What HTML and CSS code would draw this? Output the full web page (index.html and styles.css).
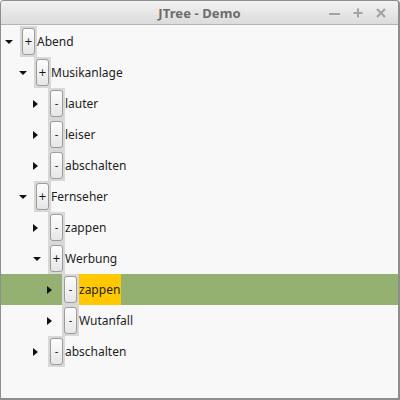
FILE: index.html
```html
<!DOCTYPE html>
<html lang="de">
<head>
  <meta charset="UTF-8">
  <title>JTree - Demo</title>
  <link rel="stylesheet" href="styles.css">
</head>
<body>
  <div class="window">
    <div class="titlebar">
      <span class="title">JTree - Demo</span>
      <div class="controls">
        <svg width="14" height="14" viewBox="0 0 14 14"><path d="M1 8h11" stroke="#a3a3a3" stroke-width="2"/></svg>
        <svg width="14" height="14" viewBox="0 0 14 14"><path d="M2.5 7h9M7 2.5v9" stroke="#a3a3a3" stroke-width="2"/></svg>
        <svg width="14" height="14" viewBox="0 0 14 14"><path d="M3 3l8 8M11 3l-8 8" stroke="#a3a3a3" stroke-width="2.2"/></svg>
      </div>
    </div>
    <ul class="tree">
      <li class="row lvl0"><span class="toggle open"></span><span class="box"><span class="btn">+</span></span><span class="label">Abend</span></li>
      <li class="row lvl1"><span class="toggle open"></span><span class="box"><span class="btn">+</span></span><span class="label">Musikanlage</span></li>
      <li class="row lvl2"><span class="toggle"></span><span class="box"><span class="btn">-</span></span><span class="label">lauter</span></li>
      <li class="row lvl2"><span class="toggle"></span><span class="box"><span class="btn">-</span></span><span class="label">leiser</span></li>
      <li class="row lvl2"><span class="toggle"></span><span class="box"><span class="btn">-</span></span><span class="label">abschalten</span></li>
      <li class="row lvl1"><span class="toggle open"></span><span class="box"><span class="btn">+</span></span><span class="label">Fernseher</span></li>
      <li class="row lvl2"><span class="toggle"></span><span class="box"><span class="btn">-</span></span><span class="label">zappen</span></li>
      <li class="row lvl2"><span class="toggle open"></span><span class="box"><span class="btn">+</span></span><span class="label">Werbung</span></li>
      <li class="row lvl3 selected"><span class="toggle"></span><span class="box"><span class="btn">-</span></span><span class="label">zappen</span></li>
      <li class="row lvl3"><span class="toggle"></span><span class="box"><span class="btn">-</span></span><span class="label">Wutanfall</span></li>
      <li class="row lvl2"><span class="toggle"></span><span class="box"><span class="btn">-</span></span><span class="label">abschalten</span></li>
    </ul>
  </div>
</body>
</html>
```

FILE: styles.css
```css
* {
  margin: 0;
  padding: 0;
  box-sizing: border-box;
}

html,
body {
  width: 100%;
  height: 100%;
  overflow: hidden;
  background-color: #fff;
}

.window {
  display: flex;
  flex-direction: column;
  width: 400px;
  height: 400px;
  border: 1px solid #8e8e8e;
  border-bottom-width: 2px;
  border-right-width: 2px;
  border-radius: 4px 4px 0 0;
  background-color: #f8f8f8;
  font-family: "Noto Sans", "Open Sans", sans-serif;
}

.titlebar {
  position: relative;
  display: flex;
  align-items: center;
  justify-content: center;
  height: 24px;
  flex: none;
  border-bottom: 1px solid #b4b4b4;
  border-radius: 3px 3px 0 0;
  background: linear-gradient(#f2f2f2, #dcdcdc);
}

.titlebar .title {
  font-size: 13px;
  font-weight: bold;
  color: #6b6b6b;
  letter-spacing: 0.1px;
}

.titlebar .controls {
  position: absolute;
  right: 10px;
  top: 5px;
  display: flex;
  gap: 9px;
}

.tree {
  list-style: none;
  padding-top: 1px;
}

.row {
  display: flex;
  align-items: stretch;
  height: 31px;
}

.row.lvl1 { padding-left: 14px; }
.row.lvl2 { padding-left: 28px; }
.row.lvl3 { padding-left: 42px; }

.row.selected {
  background-color: #94b172;
}

.toggle {
  display: flex;
  align-items: center;
  width: 19px;
  padding-left: 4px;
  flex: none;
}

.toggle::before {
  content: "";
  width: 0;
  height: 0;
  border-top: 4px solid transparent;
  border-bottom: 4px solid transparent;
  border-left: 5px solid #111;
}

.toggle.open::before {
  border-left: 4px solid transparent;
  border-right: 4px solid transparent;
  border-top: 4px solid #111;
  border-bottom: 0;
}

.box {
  display: flex;
  padding: 2px;
  background-color: #d8d8d8;
  flex: none;
}

.btn {
  display: flex;
  align-items: center;
  justify-content: center;
  width: 13px;
  border: 1px solid #9c9c9c;
  border-radius: 3px;
  background: linear-gradient(#fdfdfd, #e6e6e6);
  font-family: "DejaVu Sans", sans-serif;
  font-size: 10px;
  color: #111;
}

.label {
  padding: 0 1px 0 0;
  font-size: 12px;
  line-height: 31px;
  color: #1e1e1e;
}

.row.selected .label {
  background-color: #ffc800;
}
```
